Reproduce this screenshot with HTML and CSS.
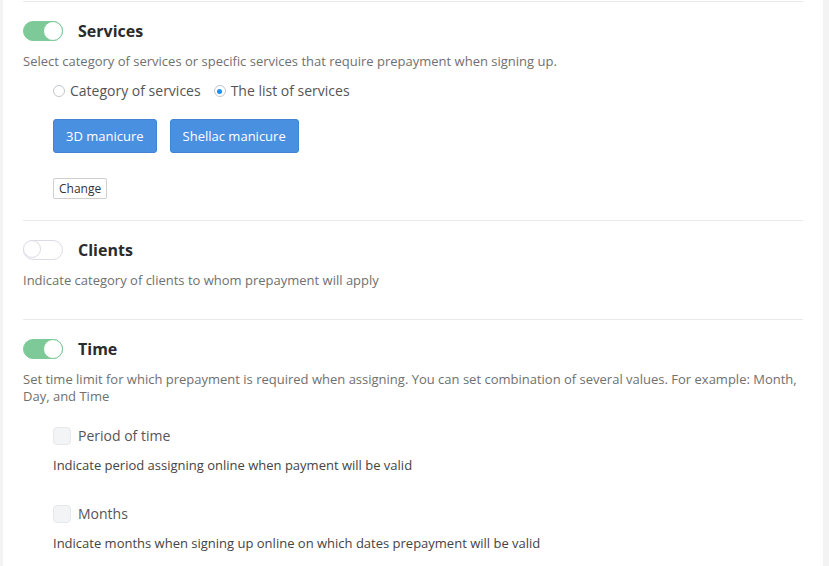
FILE: index.html
```html
<!DOCTYPE html>
<html lang="en">
  <head>
    <meta charset="UTF-8" />
    <meta name="viewport" content="width=device-width, initial-scale=1" />
    <title>Prepayment settings</title>
    <link rel="stylesheet" href="styles.css">
  </head>
  <body>
    <div class="panel">
      <!-- Services -->
      <section class="block">
        <div class="block-head">
          <span class="switch on"><span class="knob"></span></span>
          <h3>Services</h3>
        </div>
        <p class="hint">Select category of services or specific services that require prepayment when signing up.</p>
        <div class="radios">
          <label class="radio"><span class="dot"></span>Category of services</label>
          <label class="radio"><span class="dot checked"></span>The list of services</label>
        </div>
        <div class="tags">
          <button class="tag">3D manicure</button>
          <button class="tag">Shellac manicure</button>
        </div>
        <button class="small-btn">Change</button>
      </section>

      <!-- Clients -->
      <section class="block">
        <div class="block-head">
          <span class="switch"><span class="knob"></span></span>
          <h3>Clients</h3>
        </div>
        <p class="hint">Indicate category of clients to whom prepayment will apply</p>
      </section>

      <!-- Time -->
      <section class="block">
        <div class="block-head">
          <span class="switch on"><span class="knob"></span></span>
          <h3>Time</h3>
        </div>
        <p class="hint">Set time limit for which prepayment is required when assigning. You can set combination of several values. For example: Month, Day, and Time</p>
        <div class="option">
          <label class="check"><span class="box"></span>Period of time</label>
          <p class="option-hint">Indicate period assigning online when payment will be valid</p>
        </div>
        <div class="option">
          <label class="check"><span class="box"></span>Months</label>
          <p class="option-hint">Indicate months when signing up online on which dates prepayment will be valid</p>
        </div>
      </section>
    </div>
  </body>
</html>
```

FILE: styles.css
```css
/* Global */
body {
  margin: 0;
  background-color: #f3f3f3;
  font-family: "Open Sans", "Noto Sans", sans-serif;
  color: #333;
}

.panel {
  background-color: white;
  width: 780px;
  margin-left: 3px;
  padding: 1px 20px 0;
  min-height: 565px;
}

/* Section blocks */
.block {
  border-top: 1px solid #e9e9e9;
  padding: 19px 0 21px;
}

.block:nth-child(2) {
  padding-bottom: 30px;
}

.block-head {
  display: flex;
  align-items: center;
  gap: 15px;
  height: 20px;
}

.block-head h3 {
  margin: 0;
  font-size: 16px;
  font-weight: 700;
  color: #2b2b2b;
}

/* Toggle switch */
.switch {
  width: 40px;
  height: 20px;
  box-sizing: border-box;
  border-radius: 10px;
  border: 1px solid #dcdce4;
  background-color: white;
  display: flex;
  justify-content: flex-start;
}

.switch .knob {
  width: 18px;
  height: 18px;
  box-sizing: border-box;
  border-radius: 50%;
  border: 1px solid #dcdce4;
  background-color: white;
  margin: -1px 0 0 -1px;
}

.switch.on {
  background-color: #7dca98;
  border-color: #7dca98;
  justify-content: flex-end;
}

.switch.on .knob {
  border-color: #7dca98;
  width: 20px;
  height: 20px;
  margin: -1px -1px 0 0;
}

.hint {
  margin: 12px 0 0;
  font-size: 13px;
  line-height: 17px;
  color: #707070;
}

/* Radios */
.radios {
  display: flex;
  gap: 13px;
  padding-left: 30px;
  margin-top: 11px;
}

.radio {
  display: flex;
  align-items: center;
  gap: 5px;
  font-size: 14px;
  line-height: 20px;
  color: #555;
}

.dot {
  width: 12px;
  height: 12px;
  box-sizing: border-box;
  border-radius: 50%;
  border: 1px solid #c2c7cc;
  display: flex;
  align-items: center;
  justify-content: center;
}

.dot.checked::after {
  content: "";
  width: 5px;
  height: 5px;
  border-radius: 50%;
  background-color: #1e90ef;
}

/* Selected service tags */
.tags {
  display: flex;
  gap: 13px;
  padding-left: 30px;
  margin-top: 18px;
}

.tag {
  height: 34px;
  padding: 0 12px;
  background-color: #4a90e0;
  color: white;
  border: 1px solid #4184d4;
  border-radius: 3px;
  font-family: inherit;
  font-size: 13px;
}

.small-btn {
  display: block;
  margin: 25px 0 0 30px;
  height: 21px;
  padding: 0 5px;
  background-color: white;
  border: 1px solid #cfcfcf;
  border-radius: 2px;
  font-family: inherit;
  font-size: 12px;
  color: #333;
}

/* Checkbox options */
.option {
  padding-left: 30px;
  margin-top: 21px;
}

.option + .option {
  margin-top: 30px;
}

.check {
  display: flex;
  align-items: center;
  gap: 7px;
  font-size: 14px;
  line-height: 20px;
  color: #555;
}

.box {
  width: 18px;
  height: 18px;
  box-sizing: border-box;
  border-radius: 4px;
  border: 1px solid #e6e8eb;
  background-color: #f3f4f6;
}

.option-hint {
  margin: 10px 0 0;
  font-size: 13px;
  line-height: 18px;
  color: #444;
}
```
